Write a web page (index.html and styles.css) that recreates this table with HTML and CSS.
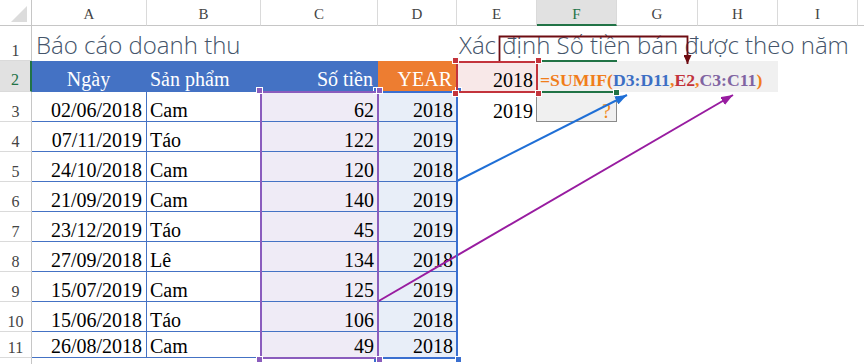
FILE: index.html
```html
<!DOCTYPE html>
<html lang="vi">
<head>
<meta charset="utf-8">
<title>SUMIF</title>
<link rel="stylesheet" href="styles.css">
</head>
<body>
<div class="sheet">
  <div class="layer cells">
    <div class="corner"><svg width="31" height="25" viewBox="0 0 31 25"><polygon points="27,6 27,22 11,22" fill="#dcdcdc"/></svg></div>
    <div class="colh">A</div>
    <div class="colh">B</div>
    <div class="colh">C</div>
    <div class="colh">D</div>
    <div class="colh">E</div>
    <div class="colh sel">F</div>
    <div class="colh">G</div>
    <div class="colh">H</div>
    <div class="colh">I</div>
    <div class="colh rest"></div>

    <div class="rowh">1</div>
    <div class="cell ca title">Báo cáo doanh thu</div>
    <div class="cell ce title title2">Xác định Số tiền bán được theo năm</div>

    <div class="rowh sel">2</div>
    <div class="cell ca th center">Ngày</div>
    <div class="cell cb th">Sản phẩm</div>
    <div class="cell cc th right">Số tiền</div>
    <div class="cell cd th orange right">YEAR</div>
    <div class="cell ce crit right">2018</div>
    <div class="cell cf formula"><span class="f-fn">=SUMIF(</span><span class="f-blue">D3:D11</span><span class="f-fn">,</span><span class="f-red">E2</span><span class="f-fn">,</span><span class="f-purple">C3:C11</span><span class="f-fn">)</span></div>

    <div class="rowh">3</div>
    <div class="cell ca td right">02/06/2018</div>
    <div class="cell cb td">Cam</div>
    <div class="cell cc td sum right">62</div>
    <div class="cell cd td yr right">2018</div>
    <div class="cell ce right">2019</div>
    <div class="cell cf result right">?</div>

    <div class="rowh">4</div>
    <div class="cell ca td right">07/11/2019</div>
    <div class="cell cb td">Táo</div>
    <div class="cell cc td sum right">122</div>
    <div class="cell cd td yr right">2019</div>

    <div class="rowh">5</div>
    <div class="cell ca td right">24/10/2018</div>
    <div class="cell cb td">Cam</div>
    <div class="cell cc td sum right">120</div>
    <div class="cell cd td yr right">2018</div>

    <div class="rowh">6</div>
    <div class="cell ca td right">21/09/2019</div>
    <div class="cell cb td">Cam</div>
    <div class="cell cc td sum right">140</div>
    <div class="cell cd td yr right">2019</div>

    <div class="rowh">7</div>
    <div class="cell ca td right">23/12/2019</div>
    <div class="cell cb td">Táo</div>
    <div class="cell cc td sum right">45</div>
    <div class="cell cd td yr right">2019</div>

    <div class="rowh">8</div>
    <div class="cell ca td right">27/09/2018</div>
    <div class="cell cb td">Lê</div>
    <div class="cell cc td sum right">134</div>
    <div class="cell cd td yr right">2018</div>

    <div class="rowh">9</div>
    <div class="cell ca td right">15/07/2019</div>
    <div class="cell cb td">Cam</div>
    <div class="cell cc td sum right">125</div>
    <div class="cell cd td yr right">2019</div>

    <div class="rowh">10</div>
    <div class="cell ca td right">15/06/2018</div>
    <div class="cell cb td">Táo</div>
    <div class="cell cc td sum right">106</div>
    <div class="cell cd td yr right">2018</div>

    <div class="rowh">11</div>
    <div class="cell ca td right">26/08/2018</div>
    <div class="cell cb td">Cam</div>
    <div class="cell cc td sum right">49</div>
    <div class="cell cd td yr right">2018</div>

    <div class="rowh last"></div>
  </div>

  <div class="layer marks">
    <div class="box box-d"><i class="sq tl"></i><i class="sq tr"></i><i class="sq bl"></i><i class="sq br"></i></div>
    <div class="box box-c"><i class="sq tl"></i><i class="sq tr"></i><i class="sq bl"></i><i class="sq br"></i></div>
    <div class="box box-f"><i class="sq br"></i></div>
    <div class="box box-e"><i class="sq tl"></i><i class="sq tr"></i><i class="sq bl"></i><i class="sq br"></i></div>
    <svg class="arrows" width="864" height="364" viewBox="0 0 864 364">
      <defs>
        <marker id="mr" viewBox="0 0 9 8" refX="9" refY="4" markerWidth="9" markerHeight="8" markerUnits="userSpaceOnUse" orient="auto"><path d="M0 0 L9 4 L0 8 Z" fill="#6e0c12"/></marker>
        <marker id="mb" viewBox="0 0 12 9" refX="12" refY="4.5" markerWidth="12" markerHeight="9" markerUnits="userSpaceOnUse" orient="auto"><path d="M0 0 L12 4.5 L0 9 Z" fill="#1f6fd6"/></marker>
        <marker id="mp" viewBox="0 0 12 9" refX="12" refY="4.5" markerWidth="12" markerHeight="9" markerUnits="userSpaceOnUse" orient="auto"><path d="M0 0 L12 4.5 L0 9 Z" fill="#981ca0"/></marker>
      </defs>
      <path d="M499.5 61 V36.5 H687.5 V64" fill="none" stroke="#6e0c12" stroke-width="1.8" marker-end="url(#mr)"/>
      <line x1="457" y1="181" x2="627" y2="95" stroke="#1f6fd6" stroke-width="2" marker-end="url(#mb)"/>
      <line x1="377" y1="302" x2="733" y2="95" stroke="#981ca0" stroke-width="2" marker-end="url(#mp)"/>
    </svg>
  </div>
</div>
</body>
</html>
```

FILE: styles.css
```css
html, body {
  margin: 0;
  padding: 0;
  background: #ffffff;
}

body {
  width: 864px;
  height: 364px;
  overflow: hidden;
  font-family: "Liberation Serif", "Times New Roman", serif;
  color: #000;
}

.sheet {
  display: grid;
  width: 864px;
  height: 364px;
}

.layer {
  grid-area: 1 / 1;
  display: grid;
  grid-template-columns: 32px 115px 114px 117px 79px 80px 80px 81px 80px 80px 1fr;
  grid-template-rows: 26px 35px 31px repeat(8, 30px) 26px 1fr;
  min-height: 0;
  min-width: 0;
}

.marks {
  pointer-events: none;
}

/* headers */
.corner {
  grid-column: 1;
  border-right: 1px solid #c6c6c6;
  border-bottom: 1px solid #c6c6c6;
  box-sizing: border-box;
}
.corner svg { display: block; }

.colh {
  display: flex;
  justify-content: center;
  align-items: flex-end;
  box-sizing: border-box;
  border-right: 1px solid #dadada;
  border-bottom: 1px solid #c6c6c6;
  font-size: 15px;
  line-height: 15px;
  padding-bottom: 3px;
  color: #444;
}
.colh.sel {
  background: #e1e1e1;
  color: #217346;
  border-bottom: 2px solid #217346;
  padding-bottom: 2px;
}
.colh.rest { border-right: none; }

.rowh {
  grid-column: 1;
  display: flex;
  justify-content: center;
  align-items: flex-end;
  box-sizing: border-box;
  border-right: 1px solid #c6c6c6;
  border-bottom: 1px solid #dadada;
  font-size: 16px;
  line-height: 16px;
  padding-bottom: 1px;
  color: #444;
}
.rowh.sel {
  background: #e1e1e1;
  color: #217346;
  border-right: 2px solid #217346;
  padding-bottom: 3px;
}
.rowh.last { border-bottom: none; }

/* cells */
.cell {
  display: flex;
  align-items: flex-end;
  box-sizing: border-box;
  white-space: nowrap;
  font-size: 20px;
  line-height: 20px;
  padding: 0 4px 1px 3px;
  min-width: 0;
}
.ca { grid-column: 2; }
.cb { grid-column: 3; }
.cc { grid-column: 4; }
.cd { grid-column: 5; }
.ce { grid-column: 6; }
.cf { grid-column: 7; }

.right { justify-content: flex-end; }
.center { justify-content: center; }

.title {
  font-family: "Open Sans", "Liberation Sans", sans-serif;
  font-weight: 300;
  font-size: 24px;
  line-height: 24px;
  color: #44546a;
  padding-left: 4px;
  padding-bottom: 4px;
}
.title2 { padding-left: 2px; }

.th {
  background: #4472c4;
  color: #ffffff;
  border-bottom: 1px solid #4472c4;
  padding-bottom: 2px;
  padding-right: 5px;
}
.th.orange {
  background: #ed7d31;
  border-bottom-color: #4472c4;
}

.crit {
  background: #f8e8e8;
  padding-bottom: 2px;
  padding-right: 4px;
}

.formula {
  grid-column: 7 / span 3;
  margin-left: -1px;
  background: #f0f0f0;
  font-weight: bold;
  font-size: 17.7px;
  line-height: 18px;
  padding: 0 0 3px 4px;
}
.f-fn { color: #f07e1b; }
.f-blue { color: #3d6fc4; }
.f-red { color: #c2343c; }
.f-purple { color: #8064a2; }

.td {
  border-bottom: 1px solid #4472c4;
}
.ca.td, .cb.td { border-right: 1px solid #4472c4; }
.sum { background: #efebf6; }
.yr { background: #e8eef8; }

.result {
  margin-left: -1px;
  background: #f0f0f0;
  border: 1px solid #8a8a8a;
  color: #f08a1c;
  padding-right: 5px;
  padding-bottom: 0;
}

/* selection / reference boxes */
.box {
  position: relative;
  box-sizing: border-box;
}
.box-c {
  grid-column: 4;
  grid-row: 4 / 13;
  margin: -1px -1px -1px -1px;
  border: 2px solid #8a5cbd;
}
.box-d {
  grid-column: 5;
  grid-row: 4 / 13;
  margin: -1px -1px -1px -1px;
  border: 2px solid #3a6fd0;
}
.box-e {
  grid-column: 6;
  grid-row: 3;
  margin: 0 -1px -1px -1px;
  border: 2px solid #c3343c;
}
.box-f {
  grid-column: 7;
  grid-row: 3;
  margin: -1px 0 -1px -1px;
  border-top: 2px solid #217346;
  border-left: 2px solid #217346;
  border-bottom: 2px solid #217346;
}

.sq {
  position: absolute;
  width: 5px;
  height: 5px;
  border: 1px solid #ffffff;
}
.box-c .sq { background: #8a5cbd; }
.box-d .sq { background: #3a6fd0; }
.box-e .sq { background: #c3343c; }
.box-f .sq { background: #217346; }

.sq.tl { left: -6px; top: -6px; }
.sq.tr { right: -6px; top: -6px; }
.sq.bl { left: -6px; bottom: -6px; }
.sq.br { right: -6px; bottom: -6px; }
.box-f .sq.br { right: -3px; bottom: -5px; }

.arrows {
  grid-area: 1 / 1 / -1 / -1;
  display: block;
}
```
